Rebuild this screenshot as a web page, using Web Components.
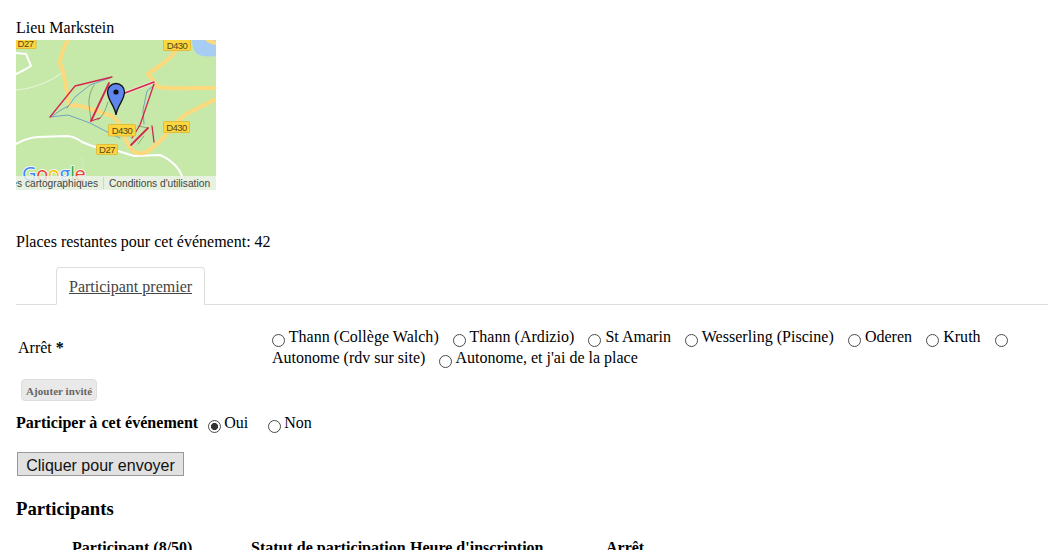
<!DOCTYPE html>
<html lang="fr"><head><meta charset="utf-8"><title>Événement</title>
<style>
html,body{margin:0;height:550px;overflow:hidden;background:#fff}
body{font:16px/18px "Liberation Serif","Times New Roman",serif;color:#000}
.wide{letter-spacing:.025px}
</style></head><body>
<event-page>
  <map-card label="Lieu Markstein"></map-card>
  <places-note>Places restantes pour cet événement: 42</places-note>
  <tab-bar>Participant premier</tab-bar>
  <stop-row label="Arrêt">
    <radio-option class="wide">Thann (Collège Walch)</radio-option>
    <radio-option class="wide">Thann (Ardizio)</radio-option>
    <radio-option class="wide">St Amarin</radio-option>
    <radio-option class="wide">Wesserling (Piscine)</radio-option>
    <radio-option class="wide">Oderen</radio-option>
    <radio-option class="wide">Kruth</radio-option>
    <radio-option>Autonome (rdv sur site)</radio-option>
    <radio-option>Autonome, et j'ai de la place</radio-option>
  </stop-row>
  <add-guest>Ajouter invité</add-guest>
  <attend-row label="Participer à cet événement"></attend-row>
  <submit-button>Cliquer pour envoyer</submit-button>
  <participants-table title="Participants"></participants-table>
</event-page>
<script>
const RADIO=`input{appearance:none;-webkit-appearance:none;box-sizing:border-box;width:13px;height:13px;border:1px solid #4a4a4a;border-radius:50%;background:#fff}
input:checked{background:radial-gradient(circle,#333 0,#333 3.2px,#fff 3.9px)}`;
function def(name, html){
  customElements.define(name, class extends HTMLElement{
    connectedCallback(){
      if(this.shadowRoot) return;
      const r=this.attachShadow({mode:'open'});
      r.innerHTML=typeof html==='function'?html(this):html;
    }
  });
}
def('event-page',`<style>:host{display:block;padding:19px 0 0 16px}</style><slot></slot>`);
def('map-card',h=>`<style>:host{display:block}
.frame{display:block;width:200px;height:150px;margin-top:3px}
text{font-family:"Liberation Sans",Arial,sans-serif}
.lbl{font-size:9.5px;fill:#54451a;text-anchor:middle;letter-spacing:-.5px}
.foot{font-size:10.2px;fill:#444}
</style>
<div>${h.getAttribute('label')}</div>
<svg class="frame" width="200" height="150" viewBox="0 0 200 150">
<rect width="200" height="150" fill="#c6e9aa"/>
<path d="M176 0h24v16q-14 2-20-3q-4-5-4-13z" fill="#a8cdf5"/>
<g fill="none" stroke-linecap="round" stroke-linejoin="round">
<g stroke="#fff" stroke-width="2">
<path d="M0 104Q10 98 22 97L50 96Q58 96 66 102Q84 110 102 111L118 116L144 115Q156 120 163 130L167 138"/>
<path d="M0 13L10 14L15 26L8 30L0 34"/>
</g>
<path d="M0 50Q25 48 46 33" stroke="#e3f3d6" stroke-width="1.2"/>
<path d="M66 118L68 136" stroke="#d6edc4" stroke-width="1"/>
<g stroke="#fbd97c" stroke-width="4">
<path d="M52 0Q44 14 44 24Q48 32 49 42Q52 56 53 66Q60 64 68 67Q84 72 96 76Q104 82 106 90Q110 104 118 112Q128 116 136 108Q146 100 152 92Q164 76 178 70L200 59"/>
<path d="M166 2Q156 18 142 27L132 34L142 47Q154 49 172 48L200 48"/>
<path d="M192 0Q195 2 200 3"/>
</g>
<g stroke="#5b91c8" stroke-width=".8">
<path d="M34 77L52 75L74 83L97 95L104 98"/>
<path d="M51 68L59 57L74 45L94 38"/>
<path d="M138 45L131 51L127 70L128 84"/>
<path d="M35 77Q44 70 52 66"/>
</g>
<g stroke="#6d8a68" stroke-width=".7">
<path d="M78 45Q72 55 73 65L75 80"/>
<path d="M92 62Q88 76 82 80"/>
<path d="M122 86L132 88M128 96L122 104"/>
</g>
<path d="M109 53L138 42" stroke="#f2ead4" stroke-width="3"/>
<g stroke="#d4264e" stroke-width="1.3">
<path d="M34 77L59 46L96 37"/>
<path d="M75 81L93 43" stroke-width="1.8"/>
<path d="M75 81L84 78"/>
<path d="M109 53L138 42" stroke-width="1.6"/>
<path d="M138 44L124 85L116 98"/>
<path d="M115 105L132 88" stroke-width="1.8"/>
<path d="M136 86L138 102"/>
</g>
</g>
<g stroke="#e0b52c" stroke-width=".8" fill="#fdd63f">
<rect x="-2" y="-1" width="22" height="9.500" rx="1"/>
<rect x="147.500" y="-1" width="27" height="11.500" rx="1"/>
<rect x="92.500" y="84.500" width="27" height="11.500" rx="1"/>
<rect x="147.500" y="81.500" width="26" height="11" rx="1"/>
<rect x="80.500" y="104.500" width="21" height="10" rx="1"/>
</g>
<text class="lbl" x="9.500" y="7">D27</text>
<text class="lbl" x="161" y="8.500">D430</text>
<text class="lbl" x="106" y="94">D430</text>
<text class="lbl" x="160.500" y="91">D430</text>
<text class="lbl" x="91" y="113">D27</text>
<path d="M100 75C99 66 91.500 60 91.500 52A8.500 8.500 0 1 1 108.500 52C108.500 60 101 66 100 75Z" fill="#5f86ee" stroke="#111" stroke-width="1.300"/>
<circle cx="100" cy="52" r="2.600" fill="#111"/>
<text x="6" y="141" font-size="20" letter-spacing="-.4" style="font-family:'Open Sans','Liberation Sans',sans-serif" stroke="#fff" stroke-width="1.500" paint-order="stroke"><tspan fill="#4285f4">G</tspan><tspan fill="#ea4335">o</tspan><tspan fill="#fbbc05">o</tspan><tspan fill="#4285f4">g</tspan><tspan fill="#34a853">l</tspan><tspan fill="#ea4335">e</tspan></text>
<rect y="136" width="200" height="14" fill="#eef3ea" opacity=".82"/>
<path d="M87.500 137V149" stroke="#cfd6ca"/>
<text class="foot" x="82" y="147" text-anchor="end">es cartographiques</text>
<text class="foot" x="93" y="147">Conditions d'utilisation</text>
</svg>`);
def('places-note',`<style>:host{display:block;margin-top:43px}</style><slot></slot>`);
def('tab-bar',`<style>:host{display:block;margin-top:16px;border-bottom:1px solid #ddd;padding-left:40px;height:37px}
a{display:inline-block;box-sizing:border-box;height:38px;padding:10px 12px 0;border:1px solid #ddd;border-bottom:1px solid #fff;border-radius:4px 4px 0 0;color:#444;text-decoration:underline;background:#fff}
</style><a><slot></slot></a>`);
def('stop-row',h=>`<style>:host{display:flex;align-items:center;margin-top:22px;height:42px}
.l{width:254px;padding-left:2px;flex:none}
.o{flex:1;line-height:21px;padding:0 20px 2px 0}
</style><div class="l">${h.getAttribute('label')} <b>*</b></div><div class="o"><slot></slot></div>`);
def('radio-option',h=>`<style>:host{display:inline}
${RADIO}
input{margin:0;vertical-align:-5px}
span{white-space:nowrap;padding-right:10px}
</style><input type="radio" name="g"> <span><slot></slot></span> `);
def('add-guest',`<style>:host{display:block;margin:10px 0 0 5px;height:22px}
a{display:inline-block;box-sizing:border-box;height:22px;padding:0 4px;border:1px solid #ddd;border-radius:4px;background:#e9e9e9;font:bold 11px/22px "Liberation Serif",serif;color:#666;letter-spacing:.05px}
</style><a><slot></slot></a>`);
def('attend-row',h=>`<style>:host{display:flex;align-items:flex-start;margin-top:13px;height:21px;line-height:18px}
b{margin-right:10px;letter-spacing:.03px}
label{display:flex;align-items:flex-start}
${RADIO}
input{margin:6px 3px 0 0}
.y{width:60px}
</style><b>${h.getAttribute('label')}</b><label class="y"><input type="radio" name="a" checked>Oui</label><label><input type="radio" name="a">Non</label>`);
def('submit-button',`<style>:host{display:block;margin:17px 0 0 1px;height:24px}
button{display:block;box-sizing:border-box;width:167px;height:24px;padding:3px 0 0;margin:0;border:1px solid #999;border-radius:0;background:#e1e1e1;font:16px/18px "Liberation Sans",Arial,sans-serif;color:#111}
</style><button><slot></slot></button>`);
def('participants-table',h=>`<style>:host{display:block;margin-top:22px}
h2{margin:0;font:bold 18.72px/22px "Liberation Serif",serif}
.t{display:grid;grid-template-columns:179px 159px 196px auto;padding-left:56px;margin-top:19px;font-weight:bold;white-space:nowrap}
</style><h2>${h.getAttribute('title')}</h2><div class="t"><div>Participant (8/50)</div><div>Statut de participation</div><div>Heure d'inscription</div><div>Arrêt</div></div>`);
</script>
</body></html>
